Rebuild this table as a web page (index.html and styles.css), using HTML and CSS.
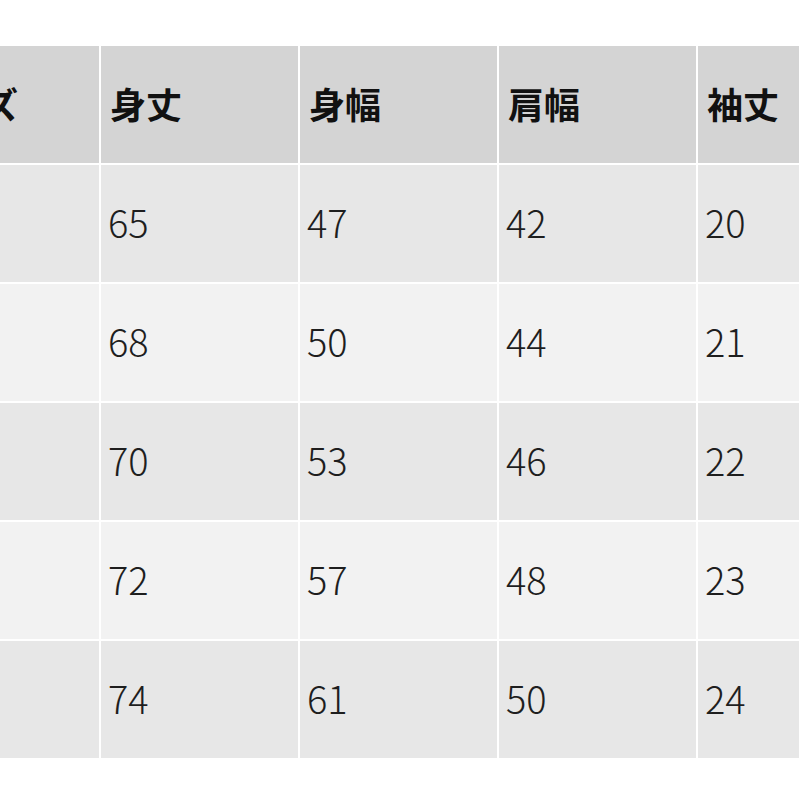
FILE: index.html
```html
<!DOCTYPE html>
<html lang="ja">
<head>
<meta charset="utf-8">
<link rel="stylesheet" href="styles.css">
</head>
<body>
<div class="page">
  <div class="size-table">
    <div class="cell head">サイズ</div>
    <div class="cell head">身丈</div>
    <div class="cell head">身幅</div>
    <div class="cell head">肩幅</div>
    <div class="cell head">袖丈</div>

    <div class="cell odd"></div>
    <div class="cell odd num">65</div>
    <div class="cell odd num">47</div>
    <div class="cell odd num">42</div>
    <div class="cell odd num">20</div>

    <div class="cell even"></div>
    <div class="cell even num">68</div>
    <div class="cell even num">50</div>
    <div class="cell even num">44</div>
    <div class="cell even num">21</div>

    <div class="cell odd"></div>
    <div class="cell odd num">70</div>
    <div class="cell odd num">53</div>
    <div class="cell odd num">46</div>
    <div class="cell odd num">22</div>

    <div class="cell even"></div>
    <div class="cell even num">72</div>
    <div class="cell even num">57</div>
    <div class="cell even num">48</div>
    <div class="cell even num">23</div>

    <div class="cell odd"></div>
    <div class="cell odd num">74</div>
    <div class="cell odd num">61</div>
    <div class="cell odd num">50</div>
    <div class="cell odd num">24</div>
  </div>
</div>
</body>
</html>
```
FILE: styles.css
```css
html, body {
  margin: 0;
  padding: 0;
  background: #ffffff;
}
.page {
  width: 799px;
  height: 799px;
  overflow: hidden;
  padding-top: 46px;
  box-sizing: border-box;
}
.size-table {
  display: grid;
  grid-template-columns: repeat(5, 197px);
  grid-auto-rows: 117px;
  gap: 2px;
  margin-left: -98px;
  width: max-content;
  background: #ffffff;
}
.cell {
  display: flex;
  align-items: center;
  padding-left: 9px;
  font-family: "Noto Sans CJK JP", "Noto Sans", sans-serif;
  color: #1e1e1e;
  white-space: nowrap;
}
.head {
  background: #d4d4d4;
  font-size: 36px;
  font-weight: 700;
  color: #111111;
  padding-bottom: 4px;
  box-sizing: border-box;
}
.odd {
  background: #e7e7e7;
}
.even {
  background: #f2f2f2;
}
.num {
  font-size: 38px;
  font-weight: 300;
  padding-left: 7px;
  padding-bottom: 4px;
  box-sizing: border-box;
}
```
